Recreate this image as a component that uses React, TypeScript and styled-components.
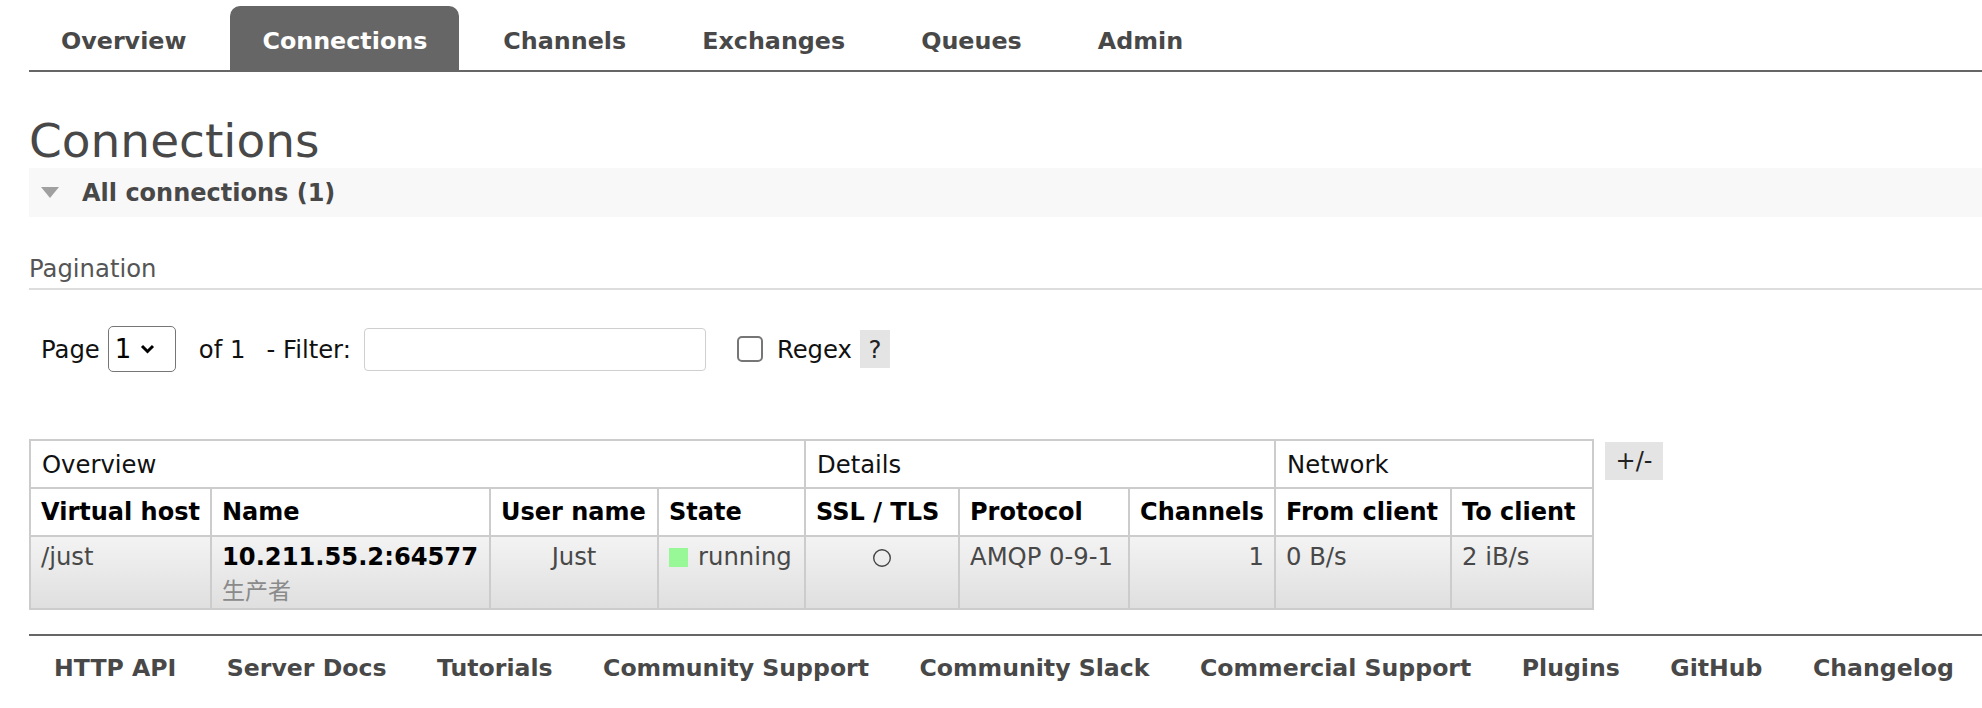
import React from 'react';
import styled, { createGlobalStyle } from 'styled-components';

const GlobalStyle = createGlobalStyle`
  html, body {
    margin: 0;
    padding: 0;
    background: #fff;
  }
  body {
    font-family: "DejaVu Sans", Verdana, "Noto Sans CJK SC", sans-serif;
    color: #484848;
  }
`;

const Page = styled.div`
  padding: 6px 0 0 29px;
`;

const Menu = styled.ul`
  display: flex;
  list-style: none;
  margin: 0;
  padding: 0;
  border-bottom: 2px solid #666;
`;

const Tab = styled.li<{ $active?: boolean }>`
  height: 64px;
  box-sizing: border-box;
  padding: 21px 32px 0;
  margin-right: 12px;
  font-size: 23.8px;
  font-weight: bold;
  line-height: 28px;
  white-space: nowrap;
  border-radius: 10px 10px 0 0;
  background: ${({ $active }) => ($active ? '#666' : 'transparent')};
  color: ${({ $active }) => ($active ? '#fff' : '#484848')};
`;

const Title = styled.h1`
  margin: 42px 0 0;
  font-size: 47px;
  line-height: 54px;
  font-weight: normal;
  color: #484848;
`;

const SectionHeader = styled.div`
  height: 49px;
  background: #f8f8f8;
  display: flex;
  align-items: center;
  gap: 23px;
  padding-left: 12px;
  font-size: 24px;
  font-weight: bold;
  color: #484848;
`;

const SubTitle = styled.h3`
  margin: 38px 0 0;
  padding-bottom: 5px;
  border-bottom: 2px solid #ddd;
  font-size: 24.3px;
  line-height: 28px;
  font-weight: normal;
  color: #555;
`;

const FilterRow = styled.div`
  margin-top: 36px;
  padding-left: 12px;
  display: flex;
  align-items: center;
  font-size: 24.3px;
  color: #111;
`;

const Label = styled.span<{ $ml?: number }>`
  margin-left: ${({ $ml }) => $ml ?? 0}px;
  white-space: nowrap;
`;

const PageSelect = styled.div`
  margin-left: 8px;
  width: 68px;
  height: 46px;
  box-sizing: border-box;
  border: 1.5px solid #767676;
  border-radius: 5px;
  display: flex;
  align-items: center;
  gap: 9px;
  padding-left: 6px;
  font-size: 26px;
  color: #000;
`;

const FilterInput = styled.input`
  margin-left: 13px;
  width: 342px;
  height: 43px;
  box-sizing: border-box;
  border: 1.5px solid #cfcfcf;
  border-radius: 4px;
  outline: none;
`;

const CheckBox = styled.span`
  margin-left: 31px;
  width: 26px;
  height: 26px;
  box-sizing: border-box;
  border: 2px solid #767676;
  border-radius: 5px;
  background: #fff;
`;

const HelpBox = styled.span`
  margin-left: 8px;
  width: 30px;
  height: 38px;
  background: #e4e4e4;
  display: flex;
  align-items: center;
  justify-content: center;
  color: #222;
`;

const TableArea = styled.div`
  margin-top: 67px;
  display: flex;
  align-items: flex-start;
  gap: 11px;
`;

const List = styled.table`
  border-collapse: collapse;
  table-layout: fixed;
  width: 1563px;
  border: 2px solid #ccc;
`;

const GroupTh = styled.th`
  height: 46px;
  padding: 0 11px;
  border: 2px solid #ccc;
  text-align: left;
  font-size: 24.3px;
  font-weight: normal;
  color: #111;
  background: #fff;
`;

const HeadTh = styled.th`
  height: 46px;
  padding: 0 10px;
  border: 2px solid #ccc;
  text-align: left;
  font-size: 24px;
  font-weight: bold;
  color: #000;
  background: #fff;
  white-space: nowrap;
`;

const Td = styled.td<{ $align?: 'left' | 'center' | 'right' }>`
  padding: 4px 10px 3px;
  border: 2px solid #ccc;
  vertical-align: top;
  line-height: 32px;
  font-size: 24.3px;
  color: #484848;
  text-align: ${({ $align }) => $align ?? 'left'};
  background: linear-gradient(#f3f3f3, #dfdfdf);
  white-space: nowrap;
`;

const ConnName = styled.div`
  font-weight: bold;
  color: #000;
  font-size: 24.2px;
`;

const ConnLabel = styled.div`
  color: #8a8a8a;
  font-family: "Noto Sans CJK SC", "DejaVu Sans", sans-serif;
  font-size: 23px;
`;

const StateBox = styled.span`
  display: inline-flex;
  align-items: center;
  gap: 10px;
`;

const StateDot = styled.span`
  width: 19px;
  height: 19px;
  background: #98f898;
`;

const ToggleCols = styled.span`
  margin-top: 3px;
  width: 58px;
  height: 38px;
  background: #e4e4e4;
  display: flex;
  align-items: center;
  justify-content: center;
  font-size: 24px;
  color: #222;
`;

const Footer = styled.div`
  margin-top: 24px;
  border-top: 2px solid #666;
  padding: 18px 0 0 25px;
  display: flex;
  gap: 50.5px;
  font-size: 23.6px;
  font-weight: bold;
  line-height: 28px;
  color: #484848;
  white-space: nowrap;
`;

const tabs = ['Overview', 'Connections', 'Channels', 'Exchanges', 'Queues', 'Admin'];
const footerLinks = [
  'HTTP API',
  'Server Docs',
  'Tutorials',
  'Community Support',
  'Community Slack',
  'Commercial Support',
  'Plugins',
  'GitHub',
  'Changelog',
];
const colWidths = [181, 279, 168, 147, 154, 170, 146, 176, 142];

const App: React.FC = () => {
  return (
    <>
      <GlobalStyle />
      <Page>
        <Menu>
          {tabs.map((t) => (
            <Tab key={t} $active={t === 'Connections'}>
              {t}
            </Tab>
          ))}
        </Menu>

        <Title>Connections</Title>
        <SectionHeader>
          <svg width="18" height="11" viewBox="0 0 18 11">
            <polygon points="0,0 18,0 9,11" fill="#a0a0a0" />
          </svg>
          <span>All connections (1)</span>
        </SectionHeader>

        <SubTitle>Pagination</SubTitle>
        <FilterRow>
          <Label>Page</Label>
          <PageSelect>
            <span>1</span>
            <svg width="15" height="10" viewBox="0 0 15 10">
              <polyline points="2,2 7.5,7.5 13,2" fill="none" stroke="#000" strokeWidth="3" />
            </svg>
          </PageSelect>
          <Label $ml={23}>of 1</Label>
          <Label $ml={21}>- Filter:</Label>
          <FilterInput type="text" />
          <CheckBox />
          <Label $ml={14}>Regex</Label>
          <HelpBox>?</HelpBox>
        </FilterRow>

        <TableArea>
          <List>
            <colgroup>
              {colWidths.map((w, i) => (
                <col key={i} style={{ width: w }} />
              ))}
            </colgroup>
            <thead>
              <tr>
                <GroupTh colSpan={4}>Overview</GroupTh>
                <GroupTh colSpan={3}>Details</GroupTh>
                <GroupTh colSpan={2}>Network</GroupTh>
              </tr>
              <tr>
                <HeadTh>Virtual host</HeadTh>
                <HeadTh>Name</HeadTh>
                <HeadTh>User name</HeadTh>
                <HeadTh>State</HeadTh>
                <HeadTh>SSL / TLS</HeadTh>
                <HeadTh>Protocol</HeadTh>
                <HeadTh>Channels</HeadTh>
                <HeadTh>From client</HeadTh>
                <HeadTh>To client</HeadTh>
              </tr>
            </thead>
            <tbody>
              <tr>
                <Td>/just</Td>
                <Td>
                  <ConnName>10.211.55.2:64577</ConnName>
                  <ConnLabel>生产者</ConnLabel>
                </Td>
                <Td $align="center">Just</Td>
                <Td>
                  <StateBox>
                    <StateDot />
                    running
                  </StateBox>
                </Td>
                <Td $align="center">
                  <svg width="20" height="20" viewBox="0 0 20 20" style={{ verticalAlign: '-3px' }}>
                    <circle cx="10" cy="10" r="8.3" fill="none" stroke="#444" strokeWidth="1.4" />
                  </svg>
                </Td>
                <Td>AMQP 0-9-1</Td>
                <Td $align="right">1</Td>
                <Td>0 B/s</Td>
                <Td>2 iB/s</Td>
              </tr>
            </tbody>
          </List>
          <ToggleCols>+/-</ToggleCols>
        </TableArea>

        <Footer>
          {footerLinks.map((l) => (
            <span key={l}>{l}</span>
          ))}
        </Footer>
      </Page>
    </>
  );
};

export default App;
